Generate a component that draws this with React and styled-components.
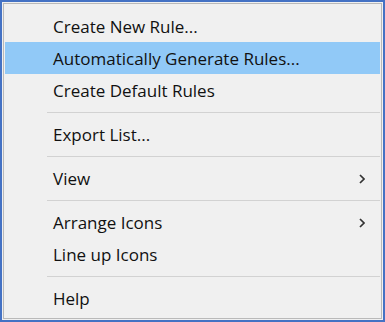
import styled, { createGlobalStyle } from "styled-components";

const GlobalStyle = createGlobalStyle`
  html, body {
    margin: 0;
    padding: 0;
    background: #ffffff;
  }
`;

const Frame = styled.div`
  width: 385px;
  height: 322px;
  box-sizing: border-box;
  border: 2px solid #4472c4;
  padding: 1px;
  background: #f0f0f0;
`;

const Menu = styled.div`
  height: 100%;
  box-sizing: border-box;
  border: 1px solid #b9b9b9;
  background: #f0f0f0;
  padding: 6px 1px 4px 1px;
  display: flex;
  flex-direction: column;
`;

const Item = styled.div`
  height: 32px;
  display: flex;
  align-items: center;
  justify-content: space-between;
  padding: 1px 15px 0 48px;
  box-sizing: border-box;
  background: ${(p) => (p.$active ? "#91c9f7" : "transparent")};
  font-family: "Open Sans", "Noto Sans", sans-serif;
  font-size: 17px;
  color: #111;
`;

const Label = styled.span`
  white-space: nowrap;
`;

const Separator = styled.div`
  height: 12px;
  display: flex;
  align-items: center;
  padding-left: 42px;

  &::after {
    content: "";
    flex: 1;
    height: 1px;
    background: #d2d2d2;
  }
`;

const Chevron = () => (
  <svg width="6" height="10" viewBox="0 0 6 10">
    <path d="M1 1 L5 5 L1 9" fill="none" stroke="#333" strokeWidth="1.7" />
  </svg>
);

const items = [
  { label: "Create New Rule..." },
  { label: "Automatically Generate Rules...", active: true },
  { label: "Create Default Rules" },
  { sep: true },
  { label: "Export List..." },
  { sep: true },
  { label: "View", sub: true },
  { sep: true },
  { label: "Arrange Icons", sub: true },
  { label: "Line up Icons" },
  { sep: true },
  { label: "Help" },
];

export default function App() {
  return (
    <>
      <GlobalStyle />
      <Frame>
        <Menu>
          {items.map((it, i) =>
            it.sep ? (
              <Separator key={i} />
            ) : (
              <Item key={i} $active={it.active}>
                <Label>{it.label}</Label>
                {it.sub && <Chevron />}
              </Item>
            )
          )}
        </Menu>
      </Frame>
    </>
  );
}
